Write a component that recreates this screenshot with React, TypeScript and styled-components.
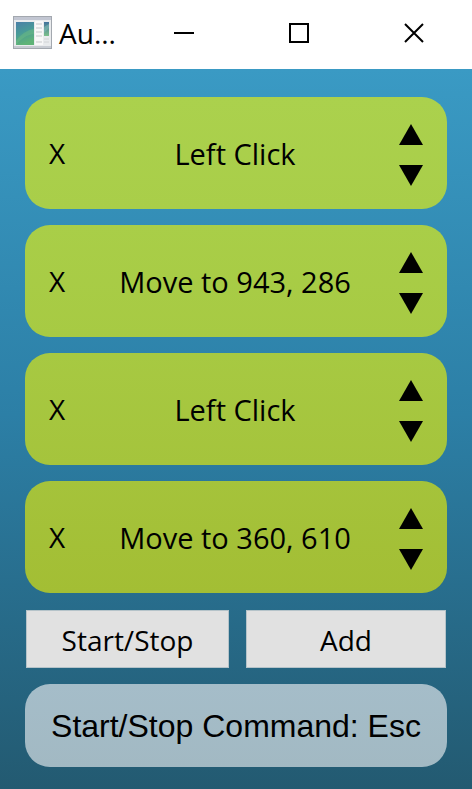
import React from "react";
import styled, { createGlobalStyle } from "styled-components";

const GlobalStyle = createGlobalStyle`
  * { box-sizing: border-box; }
  body { margin: 0; background: #235a71; }
  button { font: inherit; color: inherit; }
`;

const Window = styled.div`
  display: flex;
  flex-direction: column;
  min-height: 100vh;
  font-family: "Open Sans", "Noto Sans", sans-serif;
  font-size: 28px;
  line-height: 38px;
  color: #000;
`;

const TitleBar = styled.header`
  display: grid;
  grid-template-columns: 126px repeat(3, 1fr);
  height: 69px;
  background: #fff;
`;

const Title = styled.h1`
  display: flex;
  align-items: center;
  gap: 6px;
  margin: 0;
  padding: 0 0 4px 13px;
  font-size: 28px;
  font-weight: 400;
  white-space: nowrap;
`;

const WindowButton = styled.button`
  display: flex;
  align-items: center;
  justify-content: center;
  padding: 0 0 3px;
  border: 0;
  background: transparent;
`;

const Body = styled.main`
  flex: 1;
  display: flex;
  flex-direction: column;
  gap: 16px;
  padding: 28px 25px 22px;
  background: linear-gradient(#3a9ac4, #2c7fa6 48%, #235a71);
`;

const Steps = styled.ul`
  display: flex;
  flex-direction: column;
  gap: 16px;
  margin: 0;
  padding: 0 0 1px;
  list-style: none;
`;

const Step = styled.li<{ $from: string; $to: string }>`
  display: grid;
  grid-template-columns: 64px 1fr 72px;
  align-items: center;
  height: 112px;
  border-radius: 25px;
  background: linear-gradient(${(p) => p.$from}, ${(p) => p.$to});
`;

const StepName = styled.span`
  padding: 2px 0 0 6px;
  font-size: 29px;
  text-align: center;
  white-space: nowrap;
`;

const RemoveButton = styled.button`
  padding: 0;
  border: 0;
  background: transparent;
`;

const Arrows = styled.div`
  display: flex;
  flex-direction: column;
  align-items: center;
  gap: 20px;
  padding-top: 4px;
`;

const ArrowButton = styled.button`
  display: flex;
  padding: 0;
  border: 0;
  background: transparent;
`;

const Actions = styled.div`
  display: grid;
  grid-template-columns: 203fr 200fr;
  gap: 17px;
  padding: 0 1px;
`;

const ActionButton = styled.button`
  height: 58px;
  padding: 2px 0 0;
  border: 1px solid #b5c3c9;
  background: #e1e1e1;
`;

const Shortcut = styled.p`
  display: flex;
  align-items: center;
  justify-content: center;
  height: 83px;
  margin: 0;
  border-radius: 25px;
  background: linear-gradient(#a5bdc9, #a2b9c3);
  font-family: "Liberation Sans", Arial, sans-serif;
  font-size: 32px;
  white-space: nowrap;
`;

const steps = [
  { name: "Left Click", from: "#abd14d", to: "#a9ce49" },
  { name: "Move to 943, 286", from: "#a9ce48", to: "#a7ca43" },
  { name: "Left Click", from: "#a7c942", to: "#a5c43c" },
  { name: "Move to 360, 610", from: "#a5c33b", to: "#a3be34" },
];

function AppIcon() {
  return (
    <svg width="40" height="33" viewBox="0 0 40 33" aria-hidden="true">
      <defs>
        <linearGradient id="pane" x1="0" y1="0" x2="0.3" y2="1">
          <stop offset="0" stopColor="#4a7fa8" />
          <stop offset="0.5" stopColor="#489a98" />
          <stop offset="1" stopColor="#5fb377" />
        </linearGradient>
        <linearGradient id="strip" x1="0" y1="0" x2="0" y2="1">
          <stop offset="0" stopColor="#42749c" />
          <stop offset="1" stopColor="#7cc08b" />
        </linearGradient>
      </defs>
      <rect x="0.5" y="0.5" width="38" height="32" fill="#e9ebed" stroke="#a3a8af" />
      <path d="M1 2.5H38" stroke="#c2c6d2" strokeWidth="3" />
      <path d="M1 31H38" stroke="#c7cbd2" strokeWidth="2" />
      <rect x="3" y="6" width="18" height="23" fill="url(#pane)" />
      <path d="M3 25C8 18 14 14 21 13V18C13 19 8 23 3 29Z" fill="#70be80" opacity="0.45" />
      <rect x="22" y="5" width="8" height="24" fill="#f8f8f8" />
      <path d="M23 8H29M23 12H29M23 16H29M23 20H29M23 26H29" stroke="#c6c8cb" />
      <rect x="31" y="6" width="5" height="14" fill="url(#strip)" />
      <path d="M31 11L36 8V12L31 17Z" fill="#7eb9b6" opacity="0.6" />
      <path d="M31 23H36M31 26H36" stroke="#d2d4d6" />
    </svg>
  );
}

function Triangle({ down = false }: { down?: boolean }) {
  return (
    <svg width="24" height="21" viewBox="0 0 24 21" aria-hidden="true">
      <path d={down ? "M0 0H24L12 21Z" : "M12 0L24 21H0Z"} fill="#000" />
    </svg>
  );
}

function WindowGlyph({ d }: { d: string }) {
  return (
    <svg width="20" height="20" viewBox="0 0 20 20" aria-hidden="true">
      <path d={d} fill="none" stroke="#000" strokeWidth="2" />
    </svg>
  );
}

export default function App() {
  return (
    <>
      <GlobalStyle />
      <Window>
        <TitleBar>
          <Title>
            <AppIcon />
            Au...
          </Title>
          <WindowButton type="button" aria-label="Minimize">
            <WindowGlyph d="M0 10H20" />
          </WindowButton>
          <WindowButton type="button" aria-label="Maximize">
            <WindowGlyph d="M1 1H19V19H1Z" />
          </WindowButton>
          <WindowButton type="button" aria-label="Close">
            <WindowGlyph d="M1 1L19 19M19 1L1 19" />
          </WindowButton>
        </TitleBar>
        <Body>
          <Steps>
            {steps.map((step, index) => (
              <Step key={index} $from={step.from} $to={step.to}>
                <RemoveButton type="button" aria-label={`X, remove ${step.name}`}>
                  X
                </RemoveButton>
                <StepName>{step.name}</StepName>
                <Arrows>
                  <ArrowButton type="button" aria-label="Move up">
                    <Triangle />
                  </ArrowButton>
                  <ArrowButton type="button" aria-label="Move down">
                    <Triangle down />
                  </ArrowButton>
                </Arrows>
              </Step>
            ))}
          </Steps>
          <Actions>
            <ActionButton type="button">Start/Stop</ActionButton>
            <ActionButton type="button">Add</ActionButton>
          </Actions>
          <Shortcut>Start/Stop Command: Esc</Shortcut>
        </Body>
      </Window>
    </>
  );
}
